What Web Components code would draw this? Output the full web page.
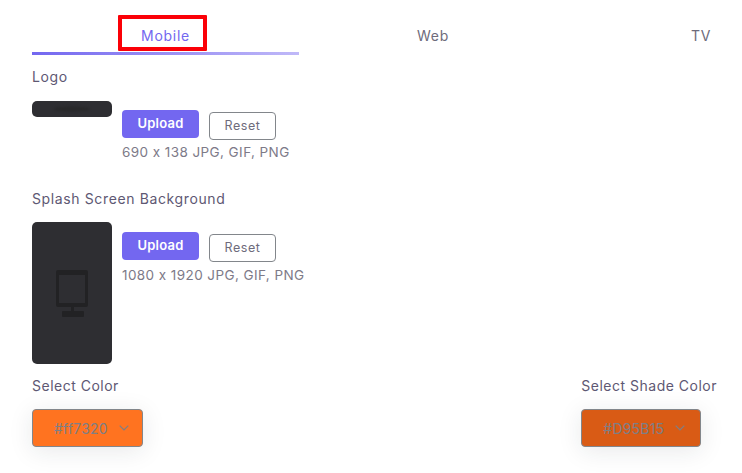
<!DOCTYPE html>
<html>
<head>
<meta charset="utf-8">
<style>
  html, body { margin: 0; height: 473px; overflow: hidden; background: #fff; }
  body { font-family: Inter, "Noto Sans", sans-serif; color: #5e5873; }
  main { display: flex; flex-direction: column; padding-left: 32px; width: 742px; box-sizing: border-box; }
  .colors { display: flex; justify-content: space-between; margin-top: 13px; padding-right: 25px; }
</style>
</head>
<body>
<main>
  <app-tabs>
    <app-tab active>Mobile</app-tab>
    <app-tab>Web</app-tab>
    <app-tab>TV</app-tab>
  </app-tabs>
  <upload-row label="Logo" hint="690 x 138 JPG, GIF, PNG" kind="logo"></upload-row>
  <upload-row label="Splash Screen Background" hint="1080 x 1920 JPG, GIF, PNG" kind="splash"></upload-row>
  <div class="colors">
    <color-select label="Select Color" value="#ff7320" bg="#ff7320" width="111"></color-select>
    <color-select label="Select Shade Color" value="#D95B15" bg="#d95b15" width="120"></color-select>
  </div>
</main>
<script>
class AppTabs extends HTMLElement {
  constructor() {
    super();
    this.attachShadow({ mode: 'open' }).innerHTML = `
      <style>
        :host { display: block; position: relative; height: 55px; width: 710px; overflow: hidden; }
        .row { display: grid; grid-template-columns: 267px 268px 268px; height: 55px; }
        /* highlight box drawn over the active tab */
        .mark { position: absolute; left: 86px; top: 15px; width: 89px; height: 36px;
                box-sizing: border-box; border: 4px solid #fb0007; border-radius: 1px; }
      </style>
      <div class="row"><slot></slot></div>
      <div class="mark"></div>`;
  }
}
class AppTab extends HTMLElement {
  constructor() {
    super();
    this.attachShadow({ mode: 'open' }).innerHTML = `
      <style>
        :host { display: flex; justify-content: center; padding-top: 27px; box-sizing: border-box;
                height: 55px; font-size: 14px; letter-spacing: .7px; line-height: 17px; color: #6e6b7b; }
        :host([active]) { color: #7367f0; border-bottom: 3px solid; border-image: linear-gradient(90deg, #7367f0, #c0b9f8) 1; }
      </style>
      <slot></slot>`;
  }
}
class UploadRow extends HTMLElement {
  constructor() {
    super();
    this.attachShadow({ mode: 'open' });
  }
  connectedCallback() {
    const splash = this.getAttribute('kind') === 'splash';
    const icon = splash
      ? `<svg width="34" height="48" viewBox="0 0 34 48" fill="#222224">
           <path fill-rule="evenodd" d="M3 1h28a2 2 0 0 1 2 2v33a2 2 0 0 1-2 2H3a2 2 0 0 1-2-2V3a2 2 0 0 1 2-2zm1 5v28h26V6z"/>
           <rect x="16" y="38" width="3" height="4"/><rect x="7" y="42" width="22" height="6" rx="1"/>
         </svg>`
      : `<svg class="soft" width="40" height="8" viewBox="0 0 40 8"><ellipse cx="20" cy="4" rx="18" ry="2.6" fill="#28282a"/></svg>`;
    this.shadowRoot.innerHTML = `
      <style>
        :host { display: block; }
        .label { font-size: 14px; letter-spacing: .62px; line-height: 18px; color: #5e5873; margin-top: 13px; white-space: nowrap; }
        .body { display: flex; gap: 10px; margin-top: ${splash ? 14 : 15}px; }
        .thumb { width: 80px; height: ${splash ? 142 : 16}px; background: #2e2e32; border-radius: 5px;
                 display: flex; align-items: center; justify-content: center; flex: none; }
        .thumb svg { filter: blur(.5px); }
        .thumb svg.soft { filter: blur(1px); }
        .side { padding-top: ${splash ? 10 : 9}px; }
        .btns { display: flex; gap: 10px; align-items: flex-start; }
        .up, .reset { box-sizing: border-box; font: inherit; padding: 0; display: flex; align-items: center; justify-content: center; }
        .up { width: 77px; height: 28px; background: #7367f0; color: #fff; border: 0; border-radius: 4px;
              font-size: 13px; font-weight: 600; letter-spacing: .25px; padding-bottom: 2px; }
        .reset { width: 67px; height: 28px; margin-top: 2px; background: #fff; color: #6e6b7b;
                 border: 1px solid #82868b; border-radius: 4px; font-size: 12.5px; letter-spacing: .55px; padding-bottom: 1px; }
        .hint { font-size: 13.5px; letter-spacing: .42px; line-height: 18px; color: #7d7a88; margin-top: ${splash ? 4 : 3}px; white-space: nowrap; }
        :host([kind="logo"]) .gap { height: 16px; }
      </style>
      <div class="label">${this.getAttribute('label')}</div>
      <div class="body">
        <div class="thumb">${icon}</div>
        <div class="side">
          <div class="btns"><button class="up">Upload</button><button class="reset">Reset</button></div>
          <div class="hint">${this.getAttribute('hint')}</div>
        </div>
      </div>
      <div class="gap"></div>`;
  }
}
class ColorSelect extends HTMLElement {
  constructor() {
    super();
    this.attachShadow({ mode: 'open' });
  }
  connectedCallback() {
    this.shadowRoot.innerHTML = `
      <style>
        :host { display: block; }
        .label { font-size: 14px; letter-spacing: .5px; line-height: 18px; color: #5e5873; white-space: nowrap; }
        .box { box-sizing: border-box; width: ${this.getAttribute('width')}px; height: 38px; margin-top: 14px;
               display: flex; align-items: center; gap: 11px; padding-left: 21px;
               background: ${this.getAttribute('bg')}; border: 1px solid #82868b; border-radius: 4px;
               box-shadow: 0 4px 24px rgba(34,41,47,.1); color: #7d7f86; font-size: 14px; letter-spacing: .2px; }
        svg { flex: none; }
      </style>
      <div class="label">${this.getAttribute('label')}</div>
      <div class="box"><span>${this.getAttribute('value')}</span>
        <svg width="10" height="6" viewBox="0 0 10 6" fill="none" stroke="#7d7f86" stroke-width="1.2"><path d="M.7.7 5 5 9.3.7"/></svg>
      </div>`;
  }
}
customElements.define('app-tabs', AppTabs);
customElements.define('app-tab', AppTab);
customElements.define('upload-row', UploadRow);
customElements.define('color-select', ColorSelect);
</script>
</body>
</html>
